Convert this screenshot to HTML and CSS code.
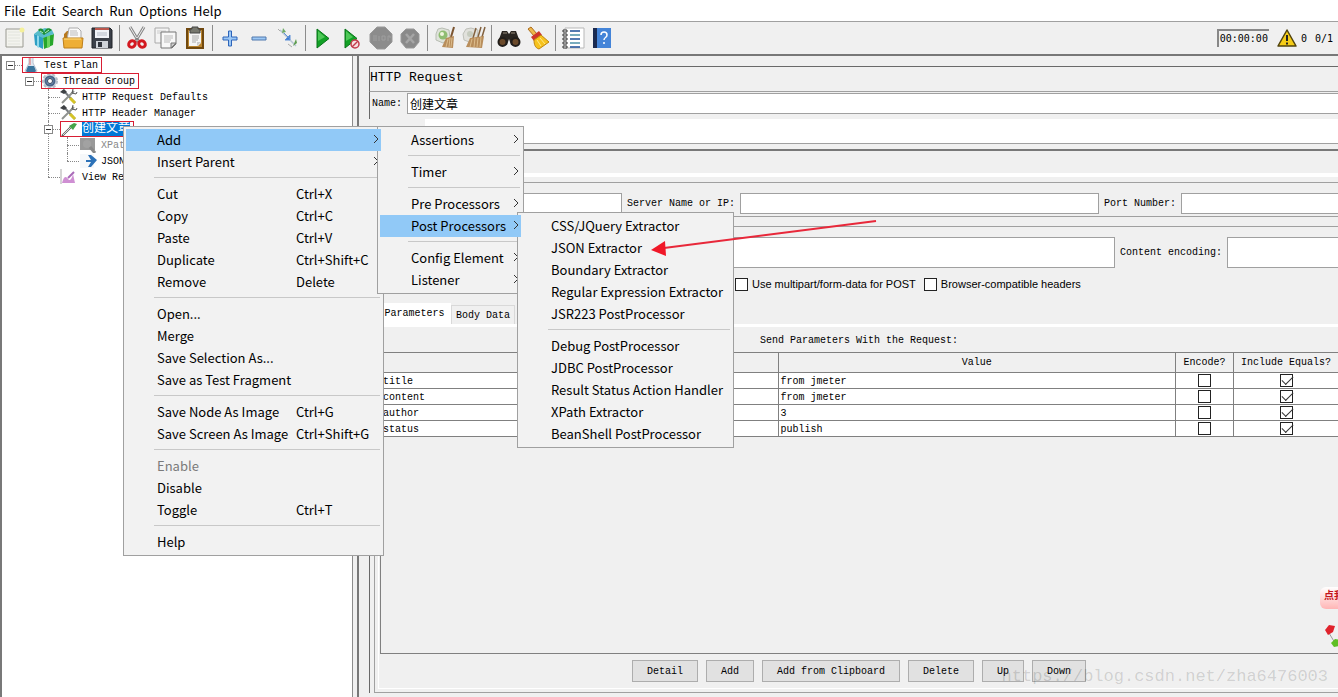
FILE: index.html
```html
<!DOCTYPE html>
<html lang="en">
<head>
    <meta charset="UTF-8">
    <meta name="viewport" content="width=device-width, initial-scale=1.0">
    <title>HTTP Request</title>
    <link rel="stylesheet" href="styles.css">
</head>
<body>
    <nav class="menubar">
        <button>File</button>
        <button>Edit</button>
        <button>Search</button>
        <button>Run</button>
        <button>Options</button>
        <button>Help</button>
    </nav>

    <div class="toolbar">
        <button aria-label="New"><svg viewBox="0 0 24 24"><path d="M3 3h17v18H3z" fill="#f3f3ee" stroke="#9a9a92"/><path d="M5 6h12M5 9h12M5 12h12M5 15h12M5 18h12" stroke="#e2e4dd"/><circle cx="19" cy="4" r="2.500" fill="#f4f09a"/></svg></button>
        <button aria-label="Templates"><svg viewBox="0 0 24 24"><path d="M2 8l9 3v12l-8-4z" fill="#2d9fc4"/><path d="M11 11l11-3-1 11-9 4z" fill="#27a62b"/><path d="M15 10l3-1v12l-3 1z" fill="#69d45c"/><path d="M5 9l2 1v12l-2-1z" fill="#8fd8ea"/><path d="M2 8l5-4 6-2 7 2 2 4-11 4z" fill="#58bccb"/><path d="M6 4c3-3 6-1 6 3 1-5 5-6 8-3l-8 5z" fill="#1c8f36"/><path d="M8 5l3 2M17 4l-4 3" stroke="#b5ecc2"/></svg></button>
        <button aria-label="Open"><svg viewBox="0 0 24 24"><path d="M3 8l3-3h4l1 2h9v14H3z" fill="#b8791d"/><path d="M8 2h9l3 3v9H6z" fill="#fafafa" stroke="#aaa"/><path d="M9 5h7M9 7h8M9 9h8" stroke="#bbb"/><path d="M2 12h20l-1 10H3z" fill="#eeae35" stroke="#bd7f1b"/><path d="M3 13h17" stroke="#ffdf85"/></svg></button>
        <button aria-label="Save"><svg viewBox="0 0 24 24"><path d="M2 2h18l2 2v18H2z" fill="#3b4049" stroke="#202329"/><path d="M5 2h14v10H5z" fill="#f0f3f8"/><path d="M5 2h14v2H5z" fill="#bb574d"/><path d="M7 7h10M7 9h10" stroke="#b5bcc7"/><path d="M6 15h12v7H6z" fill="#cfd3d9"/><path d="M8 16h4v5H8z" fill="#30343c"/></svg></button>
        <i class="sep"></i>
        <button aria-label="Cut"><svg viewBox="0 0 24 24"><path d="M5 1l9 15M19 1l-9 15" stroke="#888" stroke-width="3"/><path d="M5 1l9 15M19 1l-9 15" stroke="#eee"/><ellipse cx="7" cy="18" rx="3.500" ry="3" fill="none" stroke="#d31920" stroke-width="3" transform="rotate(-40 7 18)"/><ellipse cx="17" cy="18" rx="3.500" ry="3" fill="none" stroke="#d31920" stroke-width="3" transform="rotate(40 17 18)"/><circle cx="12" cy="13" r="1" fill="#666"/></svg></button>
        <button aria-label="Copy"><svg viewBox="0 0 24 24"><path d="M1 2h14v15H1z" fill="#f4f4f4" stroke="#aaa"/><path d="M3 5h9M3 7h9" stroke="#ccc"/><path d="M7 6h15v12l-4 4H7z" fill="#f8f8f8" stroke="#777"/><path d="M22 17h-5v5z" fill="#ccc" stroke="#777"/><path d="M10 10h9M10 12h9M10 14h7M10 16h6" stroke="#bbb"/></svg></button>
        <button aria-label="Paste"><svg viewBox="0 0 24 24"><path d="M4 3h16v19H4z" fill="#b9842e" stroke="#71490f" stroke-width="2"/><path d="M6 5h12v12l-3 3H6z" fill="#f6f6f6"/><path d="M9 1h6v2h2v4H7V3h2z" fill="#77786f" stroke="#444"/><path d="M9 10h7M9 12h7M9 14h6M9 16h4" stroke="#aaa"/><path d="M18 16h-4v4z" fill="#ccc"/></svg></button>
        <i class="sep"></i>
        <button aria-label="Expand All"><svg viewBox="0 0 24 24"><path d="M10.500 5h3v6H19v3h-5.500v6h-3v-6H5v-3h5.500z" fill="#9cc8f5" stroke="#2d64ba"/></svg></button>
        <button aria-label="Collapse All"><svg viewBox="0 0 24 24"><path d="M5 11h14v3H5z" fill="#9cc8f5" stroke="#5079ad"/></svg></button>
        <button aria-label="Toggle"><svg viewBox="0 0 24 24"><path d="M4 4l8 8M12 12l8 8" stroke="#b8c5d5" stroke-width="1.500"/><path d="M7 2l-1 5 4-1z" fill="#6faa67"/><path d="M8 7l6 6M14 9v5H9z" fill="#3d7ad2" stroke="#5c90d8"/><path d="M20 13l-3 7 4-3z" fill="#5d9c4e"/><path d="M2 3l2 2M12 18l4 3" stroke="#aaa"/></svg></button>
        <i class="sep"></i>
        <button aria-label="Start"><svg viewBox="0 0 24 24"><path d="M6 3l12 9.500L6 22z" fill="#12a126" stroke="#087419"/><path d="M7 5l7 6-7 4z" fill="#4fc858"/></svg></button>
        <button aria-label="Start no pauses"><svg viewBox="0 0 24 24"><path d="M5 3l12 9.500L5 22z" fill="#12a126" stroke="#087419"/><path d="M6 5l7 6-7 4z" fill="#4fc858"/><circle cx="15" cy="18" r="4" fill="#f6dfe1" stroke="#c33b4b" stroke-width="1.500"/><path d="M12 21l6-6" stroke="#c33b4b" stroke-width="1.500"/></svg></button>
        <button aria-label="Stop" disabled><svg viewBox="0 0 24 24"><path d="M8 1h8l7 7v8l-7 7H8l-7-7V8z" fill="#8c8c8c" stroke="#999"/><path d="M4 10h4M4 12h4M4 14h4M10 10v5M13 10h3v4h-3zM19 15v-5h2v2" fill="none" stroke="#9f9f9f"/></svg></button>
        <button aria-label="Shutdown" disabled><svg viewBox="0 0 24 24"><path d="M8 3h8l5 5v8l-5 6H8l-5-6V8z" fill="#8a8a8a" stroke="#999"/><path d="M8 8l8 9M16 8l-8 9" stroke="#a6a6a6" stroke-width="2.500"/></svg></button>
        <i class="sep"></i>
        <button aria-label="Clear"><svg viewBox="0 0 24 24"><path d="M3 8l2-5 4-1 7 2 1 8-7 5-7-3z" fill="#dfe3da" stroke="#b8bdb3"/><circle cx="10" cy="9" r="4.500" fill="#8fbd72"/><circle cx="9" cy="8" r="2" fill="#eef5dd"/><path d="M21 1l-3 10" stroke="#7b5430" stroke-width="2"/><path d="M13 12l8-2-1 12-11-1z" fill="#b88d5b"/><path d="M15 13l-2 8M17 12l-1 9M19 12l-1 9" stroke="#dcbd8d"/></svg></button>
        <button aria-label="Clear All"><svg viewBox="0 0 24 24"><path d="M1 8l3-5 5-1 7 2-1 8-5 5-8-3z" fill="#e1e1dc" stroke="#bfc0b9"/><circle cx="8" cy="8" r="3" fill="#c6cbbf"/><path d="M14 2l-3 10M19 1l-3 10M23 1l-3 10" stroke="#82613e" stroke-width="1.500"/><path d="M8 12l14-2-2 12-16-1z" fill="#b88d5b"/><path d="M10 13l-2 8M13 12l-1 9M16 12l-1 9M19 11l-1 10" stroke="#dcbd8d"/></svg></button>
        <i class="sep"></i>
        <button aria-label="Search"><svg viewBox="0 0 24 24"><path d="M5 5h5l2 3 2-3h5l4 11-3 4-6-1-2-6-2 6-6 1-3-4z" fill="#292521"/><circle cx="5.500" cy="16" r="4" fill="#6b4a2a" stroke="#211d1a" stroke-width="2"/><circle cx="18.500" cy="16" r="4" fill="#6b4a2a" stroke="#211d1a" stroke-width="2"/><path d="M6 7h4M14 7h4" stroke="#968a7a"/></svg></button>
        <button aria-label="Reset Search"><svg viewBox="0 0 24 24"><path d="M2 3l3-2 6 7-3 2z" fill="#edb84d" stroke="#ad6c1b"/><path d="M5 11l8-6 3 4-8 6z" fill="#ce352c"/><path d="M8 14l7-5 8 7-10 7c-4-1-5-5-5-9z" fill="#f6c31e" stroke="#bf8510"/><path d="M11 14l4 6M14 12l5 6" stroke="#ffe98a"/></svg></button>
        <i class="sep"></i>
        <button aria-label="Functions"><svg viewBox="0 0 24 24"><path d="M4 2h19v20H4z" fill="#fff" stroke="#b7b7b7"/><path d="M9 5h10M9 13h10M9 21h10" stroke="#1d4f98" stroke-width="1.500"/><path d="M9 9h10M9 17h10" stroke="#4c91a9" stroke-width="1.500"/><path d="M2 4h4v2H2zM2 8h4v2H2zM2 12h4v2H2zM2 16h4v2H2zM2 20h4v2H2z" fill="#fff" stroke="#333"/></svg></button>
        <button aria-label="Help"><svg viewBox="0 0 24 24"><path d="M3 2h18v20H3z" fill="#4484d8"/><path d="M3 2h4v20H3z" fill="#1a2a50"/><path d="M11 9c0-4 6-4 6 0 0 3-3 2-3 5M14 16v2" fill="none" stroke="#fff" stroke-width="1.500"/></svg></button>

        <div class="status">
            <span class="timer">00:00:00</span>
            <svg class="warning" viewBox="0 0 20 18"><path d="M10 1l9 16H1z" fill="#f5cc17" stroke="#51430c" stroke-width="1.500" stroke-linejoin="round"/><path d="M10 6v6M10 13.500v2" stroke="#222" stroke-width="2"/></svg>
            <span>0</span>
            <span class="threads">0/1</span>
        </div>
    </div>

    <main>
        <aside>
            <ul class="tree">
                <li>
                    <div class="node">
                        <i class="toggle"></i>
                        <span class="marked"><svg viewBox="0 0 18 16"><path d="M7 0h4v6l4 8c0 2-12 2-12 0l4-8z" fill="#dfe7f1" stroke="#b7c2d0"/><path d="M6 9h6l2 5c-1 2-9 2-10 0z" fill="#39759d"/><path d="M8 1v7" stroke="#e26c68"/></svg>Test Plan</span>
                    </div>
                    <ul>
                        <li>
                            <div class="node">
                                <i class="toggle"></i>
                                <span class="marked"><svg viewBox="0 0 18 16"><circle cx="9" cy="8" r="7" fill="#d5dbe3" stroke="#b4bec9" stroke-width="2" stroke-dasharray="3 2"/><circle cx="9" cy="8" r="4.500" fill="#7796bb" stroke="#4a6689" stroke-width="2"/><circle cx="9" cy="8" r="2.500" fill="#fff" stroke="#33445a"/></svg>Thread Group</span>
                            </div>
                            <ul>
                                <li>
                                    <div class="node"><span><svg viewBox="0 0 18 16"><path d="M3 1l12 13" stroke="#777c80" stroke-width="2"/><path d="M0 3l4-3 3 3-3 2z" fill="#3e4245"/><path d="M14 2L2 14" stroke="#8f938f" stroke-width="2"/><path d="M10 9l5 5" stroke="#d4c327" stroke-width="3"/><path d="M13 0l-1 4 4 1 1-2" fill="none" stroke="#555"/></svg>HTTP Request Defaults</span></div>
                                </li>
                                <li>
                                    <div class="node"><span><svg viewBox="0 0 18 16"><path d="M3 1l12 13" stroke="#777c80" stroke-width="2"/><path d="M0 3l4-3 3 3-3 2z" fill="#3e4245"/><path d="M14 2L2 14" stroke="#8f938f" stroke-width="2"/><path d="M10 9l5 5" stroke="#d4c327" stroke-width="3"/><path d="M13 0l-1 4 4 1 1-2" fill="none" stroke="#555"/></svg>HTTP Header Manager</span></div>
                                </li>
                                <li>
                                    <div class="node selected">
                                        <i class="toggle"></i>
                                        <span class="marked"><svg viewBox="0 0 18 16"><path d="M2 15L12 5" stroke="#5c5c5c" stroke-width="2"/><path d="M3 14l8-8" stroke="#ddd"/><path d="M9 5l5-3 3 1-4 6z" fill="#46a34a"/></svg><b>创建文章</b></span>
                                    </div>
                                    <ul>
                                        <li>
                                            <div class="node disabled"><span><svg viewBox="0 0 18 16"><path d="M1 1h15v12H1z" fill="#999"/><circle cx="8" cy="7" r="4" fill="#a2a2a2"/><path d="M11 10l5 6" stroke="#888" stroke-width="3"/></svg>XPath Extractor</span></div>
                                        </li>
                                        <li>
                                            <div class="node"><span><svg viewBox="0 0 18 16"><path d="M1 1h14v14H1z" fill="#f6f8fa"/><path d="M7 7h5L9 2h3l6 5-6 7H9l3-5H7z" fill="#2d72b8"/></svg>JSON Extractor</span></div>
                                        </li>
                                    </ul>
                                </li>
                                <li>
                                    <div class="node"><span><svg viewBox="0 0 18 16"><path d="M1 0v15" fill="none" stroke="#aaa"/><path d="M2 14c2-7 4-7 6-4s4-1 5-5l2 9z" fill="#cf8fd3"/><path d="M8 9l6-6" stroke="#a86ab8" stroke-width="2"/></svg>View Results Tree</span></div>
                                </li>
                            </ul>
                        </li>
                    </ul>
                </li>
            </ul>
        </aside>

        <section class="editor">
            <h1>HTTP Request</h1>
            <div class="name-row">
                <label for="name">Name:</label>
                <input id="name" type="text" value="创建文章">
            </div>
            <input class="comments" type="text" aria-label="Comments">

            <div class="request">
                <div class="server">
                    <input class="protocol" type="text" aria-label="Protocol">
                    <label for="server">Server Name or IP:</label>
                    <input id="server" type="text">
                    <label for="port">Port Number:</label>
                    <input id="port" type="text">
                </div>
                <div class="http">
                    <div class="path-row">
                        <input class="path" type="text" aria-label="Path">
                        <label for="encoding">Content encoding:</label>
                        <input id="encoding" type="text">
                    </div>
                    <div class="checks">
                        <label><input type="checkbox">Use multipart/form-data for POST</label>
                        <label><input type="checkbox">Browser-compatible headers</label>
                    </div>
                </div>
                <div class="tabs">
                    <button class="active">Parameters</button>
                    <button>Body Data</button>
                </div>
                <div class="params">
                    <h2>Send Parameters With the Request:</h2>
                    <div class="table-box">
                        <table>
                            <colgroup><col><col><col class="col-encode"><col class="col-equals"></colgroup>
                            <thead>
                                <tr><th></th><th>Value</th><th>Encode?</th><th>Include Equals?</th></tr>
                            </thead>
                            <tbody>
                                <tr><td>title</td><td>from jmeter</td><td><input type="checkbox" aria-label="Encode title"></td><td><input type="checkbox" aria-label="Include equals title" checked></td></tr>
                                <tr><td>content</td><td>from jmeter</td><td><input type="checkbox" aria-label="Encode content"></td><td><input type="checkbox" aria-label="Include equals content" checked></td></tr>
                                <tr><td>author</td><td>3</td><td><input type="checkbox" aria-label="Encode author"></td><td><input type="checkbox" aria-label="Include equals author" checked></td></tr>
                                <tr><td>status</td><td>publish</td><td><input type="checkbox" aria-label="Encode status"></td><td><input type="checkbox" aria-label="Include equals status" checked></td></tr>
                            </tbody>
                        </table>
                    </div>
                    <div class="actions">
                        <button>Detail</button>
                        <button>Add</button>
                        <button>Add from Clipboard</button>
                        <button>Delete</button>
                        <button>Up</button>
                        <button>Down</button>
                    </div>
                </div>
            </div>
        </section>
    </main>

    <!-- context menu and its submenus -->
    <div class="menu menu-main">
        <button class="open">Add<svg viewBox="0 0 6 10"><path d="M1 1l4 4-4 4"/></svg></button>
        <button>Insert Parent<svg viewBox="0 0 6 10"><path d="M1 1l4 4-4 4"/></svg></button>
        <hr>
        <button>Cut<kbd>Ctrl+X</kbd></button>
        <button>Copy<kbd>Ctrl+C</kbd></button>
        <button>Paste<kbd>Ctrl+V</kbd></button>
        <button>Duplicate<kbd>Ctrl+Shift+C</kbd></button>
        <button>Remove<kbd>Delete</kbd></button>
        <hr>
        <button>Open...</button>
        <button>Merge</button>
        <button>Save Selection As...</button>
        <button>Save as Test Fragment</button>
        <hr>
        <button>Save Node As Image<kbd>Ctrl+G</kbd></button>
        <button>Save Screen As Image<kbd>Ctrl+Shift+G</kbd></button>
        <hr>
        <button disabled>Enable</button>
        <button>Disable</button>
        <button>Toggle<kbd>Ctrl+T</kbd></button>
        <hr>
        <button>Help</button>
    </div>

    <div class="menu menu-add">
        <button>Assertions<svg viewBox="0 0 6 10"><path d="M1 1l4 4-4 4"/></svg></button>
        <hr>
        <button>Timer<svg viewBox="0 0 6 10"><path d="M1 1l4 4-4 4"/></svg></button>
        <hr>
        <button>Pre Processors<svg viewBox="0 0 6 10"><path d="M1 1l4 4-4 4"/></svg></button>
        <button class="open">Post Processors<svg viewBox="0 0 6 10"><path d="M1 1l4 4-4 4"/></svg></button>
        <hr>
        <button>Config Element<svg viewBox="0 0 6 10"><path d="M1 1l4 4-4 4"/></svg></button>
        <button>Listener<svg viewBox="0 0 6 10"><path d="M1 1l4 4-4 4"/></svg></button>
    </div>

    <div class="menu menu-post">
        <button>CSS/JQuery Extractor</button>
        <button>JSON Extractor</button>
        <button>Boundary Extractor</button>
        <button>Regular Expression Extractor</button>
        <button>JSR223 PostProcessor</button>
        <hr>
        <button>Debug PostProcessor</button>
        <button>JDBC PostProcessor</button>
        <button>Result Status Action Handler</button>
        <button>XPath Extractor</button>
        <button>BeanShell PostProcessor</button>
    </div>

    <svg class="pointer" viewBox="0 0 228 40"><path d="M226 4L14 31" stroke="#e8283a" stroke-width="2"/><path d="M1 33l14-9 1 15z" fill="#f01828"/></svg>

    <div class="sticker">
        <span>点我</span>
        <svg viewBox="0 0 14 26"><path d="M5 10l6 10" stroke="#999"/><path d="M1 7l4-5 6 1-2 6-5 3z" fill="#e0232c"/><path d="M7 20l4-4 5 1v6l-6 1z" fill="#5fbf24"/></svg>
    </div>
    <div class="watermark">https://blog.csdn.net/zha6476003</div>
</body>
</html>
```
FILE: styles.css
```css
* {
    box-sizing: border-box;
}

body {
    margin: 0;
    height: 100vh;
    display: flex;
    flex-direction: column;
    overflow: hidden;
    position: relative;
    background-color: #f0f0f0;
    color: #000;
    font-family: "Liberation Mono", "Noto Sans CJK SC", monospace;
    font-size: 10px;
}

button, input {
    font: inherit;
    color: inherit;
    margin: 0;
}

input[type="text"] {
    min-width: 0;
    height: 21px;
    padding: 0 2px;
    border: 1px solid #a0a0a0;
    background-color: #fff;
}

/* Menu bar */
.menubar {
    display: flex;
    flex: none;
    height: 22px;
    padding-left: 1px;
    background-color: #fff;
    border-bottom: 1px solid #a0a0a0;
    font-family: "Noto Sans CJK SC", "Noto Sans", sans-serif;
    font-size: 13px;
}

.menubar button {
    border: none;
    background: none;
    padding: 0 3px;
    line-height: 22px;
}

/* Toolbar */
.toolbar {
    display: flex;
    flex: none;
    align-items: center;
    height: 34px;
    border-bottom: 2px solid #787878;
}

.toolbar button {
    display: flex;
    justify-content: center;
    width: 29px;
    padding: 0;
    border: none;
    background: none;
}

.toolbar button svg {
    width: 24px;
    height: 24px;
    fill: none;
}

.sep {
    width: 6px;
    height: 26px;
    background: linear-gradient(#8c8c8c, #8c8c8c) center / 1px 100% no-repeat;
}

.status {
    display: flex;
    align-items: center;
    gap: 4px;
    margin-left: auto;
    padding-right: 5px;
    font-family: "DejaVu Sans Mono", monospace;
}

.timer {
    height: 18px;
    padding: 0 1px;
    line-height: 16px;
    border-top: 2px solid #888;
    border-left: 2px solid #888;
}

.warning {
    width: 20px;
    height: 18px;
    margin-left: 4px;
}

.threads {
    margin-left: 4px;
}

main {
    display: flex;
    flex: 1;
    min-height: 0;
}

/* Tree */
aside {
    width: 353px;
    flex: none;
    background-color: #fff;
    border-left: 2px solid #787878;
    border-right: 1px solid #8c8c8c;
}

.tree, .tree ul {
    list-style: none;
    margin: 0;
    padding: 0;
}

.tree {
    padding-top: 1px;
}

.tree ul {
    padding-left: 19px;
}

.tree li {
    position: relative;
}

.tree li::before {
    content: "";
    position: absolute;
    left: 8px;
    top: 8px;
    width: 12px;
    border-top: 1px dotted #888;
}

.tree ul ul li::after {
    content: "";
    position: absolute;
    left: 8px;
    top: 0;
    height: 100%;
    border-left: 1px dotted #888;
}

.tree ul ul li:last-child::after {
    height: 8px;
}

.node {
    display: flex;
    align-items: center;
    height: 16px;
    padding-left: 20px;
    white-space: nowrap;
}

.node span {
    display: flex;
    align-items: center;
    gap: 4px;
    height: 16px;
    padding-right: 4px;
}

.node svg {
    width: 18px;
    height: 16px;
    fill: none;
}

.node .marked {
    outline: 1px solid #d81e34;
    outline-offset: -1px;
}

.node b {
    height: 14px;
    line-height: 14px;
    font-size: 12px;
    font-weight: normal;
    color: #fff;
    background-color: #0078d7;
}

.disabled {
    color: #888;
}

.toggle {
    position: absolute;
    z-index: 1;
    left: 4px;
    top: 4px;
    width: 9px;
    height: 9px;
    border: 1px solid #888;
    background: linear-gradient(#333, #333) center / 5px 1px no-repeat #fff;
}

/* Editor */
.editor {
    display: flex;
    flex-direction: column;
    flex: 1;
    min-width: 0;
    margin-left: 4px;
    padding-left: 10px;
    border-left: 2px solid #787878;
    padding-top: 10px;
}

.editor > * {
    flex: none;
    border-left: 1px solid #696969;
}

h1 {
    margin: 0;
    height: 25px;
    line-height: 22px;
    border-top: 1px solid #696969;
    font-size: 13px;
    font-weight: normal;
}

.name-row {
    display: flex;
    align-items: center;
    gap: 5px;
    height: 28px;
    padding: 0 0 4px 2px;
    border-top: 1px solid #a0a0a0;
}

.name-row input {
    flex: 1;
    border-right: none;
    font-size: 12px;
}

.editor .comments {
    height: 25px;
    margin-left: 56px;
    border: none;
    border-bottom: 1px solid #a0a0a0;
}

.editor .request {
    flex: 1;
    min-height: 0;
    display: flex;
    flex-direction: column;
    margin: 5px 0 4px 5px;
    padding: 22px 0 3px 3px;
    border-top: 2px solid #787878;
    border-left: 1px solid #a0a0a0;
    border-bottom: 1px solid #a0a0a0;
    box-shadow: -4px 0 0 #f0f0f0, -5px 0 0 #696969;
}

.server {
    display: flex;
    align-items: center;
    gap: 5px;
    height: 44px;
    padding: 16px 0 2px 107px;
    border-top: 4px solid #fff;
    border-bottom: 1px solid #a0a0a0;
    background: linear-gradient(#a0a0a0, #a0a0a0) 0 5px / 100% 1px no-repeat;
}

.protocol {
    width: 137px;
}

#server {
    flex: 1;
}

#port {
    width: 157px;
    border-right: none;
}

.http {
    height: 77px;
    margin-top: 9px;
    border-top: 1px solid #a0a0a0;
}

.path-row {
    display: flex;
    align-items: center;
    gap: 5px;
    padding-top: 10px;
}

.path-row input[type="text"] {
    height: 31px;
}

.path {
    flex: 1;
    margin-left: 107px;
}

#encoding {
    width: 111px;
    border-right: none;
}

.checks {
    display: flex;
    gap: 8px;
    margin: 8px 0 0 357px;
    font-family: "Liberation Sans", Arial, sans-serif;
    font-size: 11px;
}

.checks label {
    display: flex;
    align-items: center;
    gap: 4px;
    height: 16px;
}

input[type="checkbox"] {
    appearance: none;
    width: 13px;
    height: 13px;
    border: 1px solid #222;
    background-color: #fff;
}

input[type="checkbox"]:checked::before {
    content: "";
    display: block;
    width: 10px;
    height: 5px;
    margin: 1px 0 0 1px;
    border-left: 1px solid #333;
    border-bottom: 1px solid #333;
    transform: rotate(-45deg);
}

.tabs {
    display: flex;
    align-items: flex-end;
    height: 21px;
}

.tabs button {
    height: 19px;
    padding: 0 4px;
    border: 1px solid #d9d9d9;
    border-bottom: none;
    background-color: #f0f0f0;
}

.tabs .active {
    height: 21px;
    width: 73px;
    border: none;
    background-color: #fff;
}

.params {
    flex: 1;
    min-height: 0;
    display: flex;
    flex-direction: column;
    padding-left: 1px;
    border-top: 3px solid #fff;
    border-left: 1px solid #fff;
    border-bottom: 1px solid #fff;
}

h2 {
    margin: 0;
    height: 25px;
    line-height: 27px;
    text-align: center;
    font-size: 10px;
    font-weight: normal;
}

.table-box {
    flex: 1;
    min-height: 0;
    border: 1px solid #808080;
    border-right: none;
}

table {
    width: 100%;
    table-layout: fixed;
    border-collapse: separate;
    border-spacing: 0;
}

.col-encode {
    width: 58px;
}

.col-equals {
    width: 104px;
}

th, td {
    padding: 0;
    border-right: 1px solid #808080;
    border-bottom: 1px solid #808080;
}

th:last-child, td:last-child {
    border-right: none;
}

th {
    height: 20px;
    font-weight: normal;
}

td {
    height: 16px;
    line-height: 13px;
    padding: 2px 0 0 2px;
    background-color: #fff;
}

td:nth-child(n+3) {
    padding: 0;
    text-align: center;
    line-height: 0;
}

.actions {
    display: flex;
    justify-content: center;
    gap: 8px;
    padding: 6px 0;
}

.actions button {
    height: 22px;
    padding: 0 14px;
    border: 1px solid #adadad;
    background-color: #e1e1e1;
}

/* Popup menus */
.menu {
    position: absolute;
    padding: 2px;
    border: 1px solid #a0a0a0;
    background-color: #f2f2f2;
    font-family: "Noto Sans CJK SC", "Noto Sans", sans-serif;
    font-size: 13px;
}

.menu-main {
    left: 123px;
    top: 126px;
    width: 261px;
}

.menu-add {
    left: 377px;
    top: 126px;
    width: 147px;
}

.menu-post {
    left: 517px;
    top: 212px;
    width: 217px;
}

.menu button {
    display: flex;
    align-items: center;
    position: relative;
    width: 100%;
    height: 22px;
    padding: 0 0 2px 31px;
    border: none;
    background: none;
    white-space: nowrap;
}

.menu button:disabled {
    color: #7a7a7a;
}

/* the open item stays above its submenu */
.menu .open {
    z-index: 1;
    background-color: #91c9f7;
}

.menu svg {
    width: 6px;
    height: 10px;
    margin-left: auto;
    margin-right: 2px;
    fill: none;
    stroke: #333;
}

.menu kbd {
    position: absolute;
    left: 170px;
    font: inherit;
}

.menu hr {
    height: 1px;
    margin: 4px 1px 5px 28px;
    border: none;
    background-color: #c8c8c8;
}

.pointer {
    position: absolute;
    left: 650px;
    top: 217px;
    width: 228px;
    height: 40px;
    fill: none;
    z-index: 2;
}

.sticker {
    position: absolute;
    right: 0;
    bottom: 48px;
    width: 18px;
    overflow: hidden;
}

.sticker span {
    display: block;
    width: 30px;
    height: 22px;
    padding-left: 4px;
    margin-bottom: 14px;
    line-height: 20px;
    border-radius: 6px;
    background: linear-gradient(#fff, #ffb5b5);
    color: #c4141c;
    font-weight: bold;
}

.sticker svg {
    display: block;
    width: 14px;
    height: 26px;
    margin-left: 4px;
    fill: none;
}

.watermark {
    position: absolute;
    right: 10px;
    bottom: 8px;
    font-size: 17px;
    line-height: 24px;
    color: rgba(0, 0, 0, 0.15);
    pointer-events: none;
}
```
